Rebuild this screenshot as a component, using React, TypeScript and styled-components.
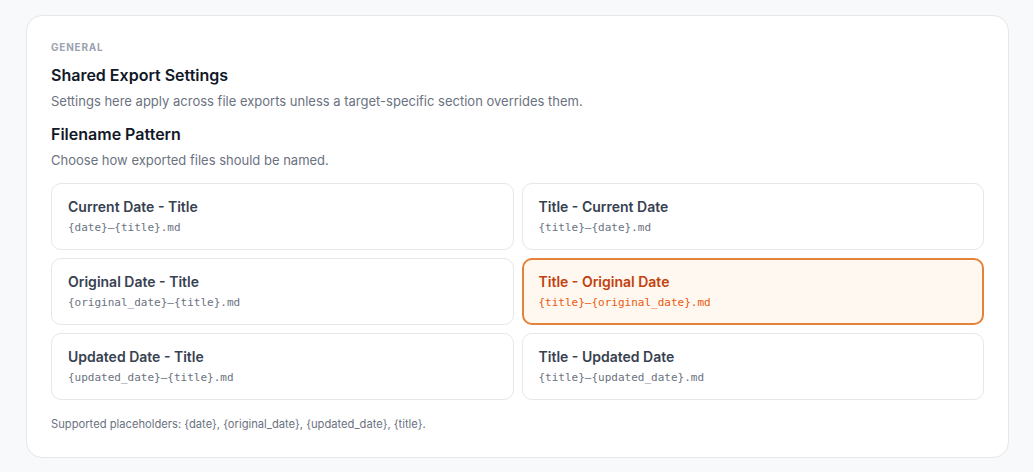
import React from "react";
import styled, { createGlobalStyle } from "styled-components";

const GlobalStyle = createGlobalStyle`
  * { box-sizing: border-box; }
  body {
    margin: 0;
    background: #f8f9fa;
    font-family: Inter, "Noto Sans", "Liberation Sans", sans-serif;
    -webkit-font-smoothing: antialiased;
  }
`;

const Page = styled.div`
  padding: 15px 24px 15px 26px;
`;

const Panel = styled.section`
  background: #ffffff;
  border: 1px solid #e5e7eb;
  border-radius: 16px;
  padding: 24px 24px 25px;
`;

const Eyebrow = styled.div`
  font-size: 10px;
  line-height: 14px;
  font-weight: 700;
  letter-spacing: 0.08em;
  text-transform: uppercase;
  color: #9ca3af;
`;

const Heading = styled.h2<{ $top: number }>`
  margin: ${(p) => p.$top}px 0 0;
  font-size: 16px;
  line-height: 24px;
  font-weight: 600;
  color: #111827;
`;

const Description = styled.p`
  margin: 4px 0 0;
  font-size: 13px;
  line-height: 20px;
  color: #6b7280;
`;

const OptionGrid = styled.div`
  display: grid;
  grid-template-columns: 1fr 1fr;
  gap: 8px;
  margin-top: 13px;
`;

const Option = styled.button<{ $selected?: boolean }>`
  display: flex;
  flex-direction: column;
  gap: 3px;
  text-align: left;
  font: inherit;
  cursor: pointer;
  border-radius: 10px;
  border: ${(p) => (p.$selected ? "2px solid #e5823a" : "1px solid #e5e7eb")};
  padding: ${(p) => (p.$selected ? "12px 15px" : "13px 16px")};
  background: ${(p) => (p.$selected ? "#fff8f1" : "#ffffff")};
`;

const OptionTitle = styled.span<{ $selected?: boolean }>`
  font-size: 14px;
  line-height: 20px;
  font-weight: 600;
  color: ${(p) => (p.$selected ? "#c2410c" : "#374151")};
`;

const Pattern = styled.code<{ $selected?: boolean }>`
  font-family: "DejaVu Sans Mono", "Liberation Mono", monospace;
  font-size: 11px;
  line-height: 16px;
  color: ${(p) => (p.$selected ? "#ea580c" : "#6b7280")};
`;

const Footnote = styled.p`
  margin: 16px 0 0;
  font-size: 11.2px;
  line-height: 16px;
  color: #6b7280;
`;

const options = [
  { title: "Current Date - Title", pattern: "{date}–{title}.md" },
  { title: "Title - Current Date", pattern: "{title}–{date}.md" },
  { title: "Original Date - Title", pattern: "{original_date}–{title}.md" },
  { title: "Title - Original Date", pattern: "{title}–{original_date}.md" },
  { title: "Updated Date - Title", pattern: "{updated_date}–{title}.md" },
  { title: "Title - Updated Date", pattern: "{title}–{updated_date}.md" },
];

const App: React.FC = () => {
  const [selected, setSelected] = React.useState(3);

  return (
    <Page>
      <GlobalStyle />
      <Panel>
        <Eyebrow>General</Eyebrow>
        <Heading $top={9}>Shared Export Settings</Heading>
        <Description>
          Settings here apply across file exports unless a target-specific
          section overrides them.
        </Description>
        <Heading $top={11}>Filename Pattern</Heading>
        <Description>Choose how exported files should be named.</Description>
        <OptionGrid>
          {options.map((opt, i) => (
            <Option
              key={opt.pattern}
              $selected={i === selected}
              onClick={() => setSelected(i)}
            >
              <OptionTitle $selected={i === selected}>{opt.title}</OptionTitle>
              <Pattern $selected={i === selected}>{opt.pattern}</Pattern>
            </Option>
          ))}
        </OptionGrid>
        <Footnote>
          Supported placeholders: {"{date}"}, {"{original_date}"},{" "}
          {"{updated_date}"}, {"{title}"}.
        </Footnote>
      </Panel>
    </Page>
  );
};

export default App;
